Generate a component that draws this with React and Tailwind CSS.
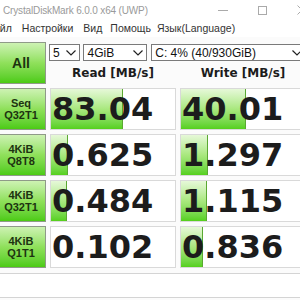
const rows = [
  { top: 'Seq', bottom: 'Q32T1', read: '83.04', write: '40.01', rBar: 72, wBar: 65 },
  { top: '4KiB', bottom: 'Q8T8', read: '0.625', write: '1.297', rBar: 17, wBar: 27 },
  { top: '4KiB', bottom: 'Q32T1', read: '0.484', write: '1.115', rBar: 16, wBar: 26 },
  { top: '4KiB', bottom: 'Q1T1', read: '0.102', write: '0.836', rBar: 0, wBar: 22 },
]

const greenBtn =
  'border border-[#8f9a88] bg-gradient-to-b from-[#cdf2b2] via-[#8fe05a] to-[#4bcb10] text-[#1d3310] font-bold flex flex-col items-center justify-center leading-[12px]'

function Chevron() {
  return (
    <svg width="10" height="6" viewBox="0 0 10 6" className="shrink-0">
      <polyline points="0.5,0.5 5,5 9.5,0.5" fill="none" stroke="#222" strokeWidth="1.2" />
    </svg>
  )
}

function Select({ className, label }) {
  return (
    <div className={`h-[17px] border border-[#7a7a7a] bg-white flex items-center justify-between pl-[3px] pr-[3px] text-[12px] text-[#111] ${className}`}>
      <span>{label}</span>
      <Chevron />
    </div>
  )
}

function Value({ text, bar }) {
  return (
    <div className="relative border border-[#d9d9d9] bg-white flex items-center overflow-hidden">
      {bar > 0 && (
        <div
          className="absolute left-0 top-0 bottom-0 bg-gradient-to-b from-[#e6f8d8] via-[#a9e87e] to-[#55d01a] border-r border-[#5aa832]"
          style={{ width: bar }}
        />
      )}
      <span className="relative pl-[1px] text-[32px] leading-none font-bold text-[#1c1c1c]" style={{ fontFamily: '"DejaVu Sans", sans-serif' }}>
        {text}
      </span>
    </div>
  )
}

export default function App() {
  return (
    <div className="w-[300px] h-[300px] overflow-hidden bg-[#fbfbfb]" style={{ fontFamily: '"Liberation Sans", Arial, sans-serif' }}>
      {/* title bar */}
      <div className="h-[20px] bg-white flex items-center justify-between">
        <span className="pl-[3px] text-[10px] tracking-[-0.15px] text-[#9a9a9a]">CrystalDiskMark 6.0.0 x64 (UWP)</span>
        <div className="flex items-center gap-[30px] pr-0 mr-[-7px]">
          <svg width="10" height="10" viewBox="0 0 10 10"><line x1="0" y1="5.5" x2="10" y2="5.5" stroke="#aaa" strokeWidth="1" /></svg>
          <svg width="9" height="9" viewBox="0 0 9 9"><rect x="0.5" y="0.5" width="8" height="8" fill="none" stroke="#aaa" strokeWidth="1" /></svg>
          <svg width="10" height="10" viewBox="0 0 10 10"><path d="M0.5 0.5 L9.5 9.5 M9.5 0.5 L0.5 9.5" stroke="#aaa" strokeWidth="1" /></svg>
        </div>
      </div>

      {/* menu */}
      <div className="h-[17px] bg-white flex items-center text-[10.5px] text-[#333] whitespace-nowrap">
        <span className="ml-[-14px]">Файл</span>
        <span className="ml-[10px]">Настройки</span>
        <span className="ml-[10px]">Вид</span>
        <span className="ml-[8px]">Помощь</span>
        <span className="ml-[6px]">Язык(Language)</span>
      </div>

      {/* main grid */}
      <div className="ml-[-4px] mt-[5px] grid grid-cols-[50px_126px_126px] auto-rows-[42px] gap-x-[4px] gap-y-[4px] w-[310px]">
        <div className={`${greenBtn} text-[14px]`}>All</div>
        <div className="col-span-2 flex flex-col">
          <div className="mt-[2px] flex items-center">
            <Select className="ml-[-1px] w-[32px]" label="5" />
            <Select className="ml-[3px] w-[65px]" label="4GiB" />
            <Select className="ml-[4px] w-[158px]" label="C: 4% (40/930GiB)" />
          </div>
          <div className="flex-1 grid grid-cols-[126px_126px] gap-x-[4px] items-center text-[12px] font-bold text-[#1c1c1c]" style={{ fontFamily: '"DejaVu Sans", sans-serif' }}>
            <div className="text-center">Read [MB/s]</div>
            <div className="text-center">Write [MB/s]</div>
          </div>
        </div>

        {rows.map((r, i) => (
          <div key={i} className="contents">
            <div className={`${greenBtn} text-[11px]`}>
              <span>{r.top}</span>
              <span>{r.bottom}</span>
            </div>
            <Value text={r.read} bar={r.rBar} />
            <Value text={r.write} bar={r.wBar} />
          </div>
        ))}
      </div>

      {/* comment */}
      <div className="mt-[5px] h-[25px] border-y border-[#d4d4d4] bg-white" />
    </div>
  )
}
